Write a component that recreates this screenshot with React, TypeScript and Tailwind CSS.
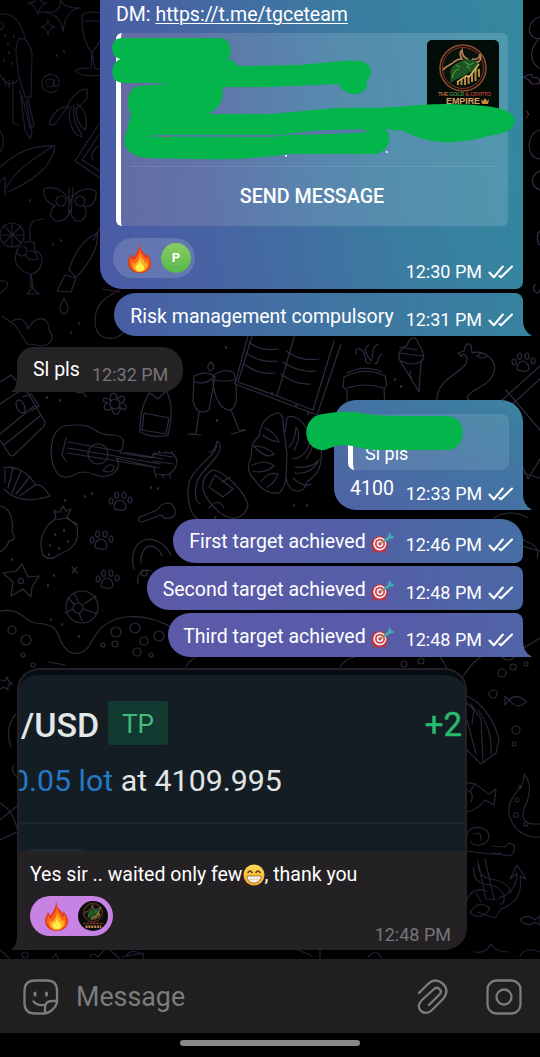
import React from "react";

function Checks() {
  return (
    <svg className="h-4 w-[26px] shrink-0" viewBox="0 0 26 16" fill="none" stroke="#fff" strokeWidth="2.1" strokeLinecap="round" strokeLinejoin="round">
      <path d="M1.500 8.500 5.800 13.200 14.800 2.500M11.500 12 13 13.200 24 2.500" />
    </svg>
  );
}

function Fire({ className }: { className: string }) {
  return (
    <svg className={className} viewBox="0 0 24 30">
      <path d="M11 0c1 3 0 5 4 9 1 1 2 2 2 4 1-1 1-2 1-3 3 3 6 8 5 12-1 5-6 8-11 8S0 27 0 20c0-4 2-6 3-9 1 1 2 3 2 4C8 11 11 7 11 0z" fill="#e63a16" />
      <path d="M12 4c0 3 1 6 3 8s2 4 3 4c1-1 1-2 1-3 2 3 3 7 2 10-1 3-5 6-9 6S2 26 2 20c0-2 0-4 1-6 1 1 1 4 3 3 3-3 6-8 6-13z" fill="#f9691a" />
      <path d="M12 10c0 5 4 6 5 10 1 1 2-1 2-2 2 6-2 11-7 11s-8-3-7-9c1 1 2 1 3 0 2-2 4-5 4-10z" fill="#ffac20" />
      <path d="M12 16c0 3 1 4 2 5s3 3 2 5c-1 3-7 3-8 0-1-3 0-4 1-4 1 0 3-3 3-6z" fill="#ffeb4a" />
    </svg>
  );
}

function Target() {
  return (
    <svg className="h-[22px] w-[24px] shrink-0" viewBox="0 0 24 22">
      <path d="M3 18 1.500 21M14 19l1 2.500" stroke="#94404a" strokeWidth="1.500" />
      <circle cx="8.500" cy="12.500" r="8.300" fill="#c5303c" />
      <circle cx="8.800" cy="11.800" r="6.600" fill="#f3e9ee" />
      <circle cx="9" cy="11.800" r="4.900" fill="#c9303e" />
      <circle cx="9" cy="11.800" r="3.400" fill="#f3e9ee" />
      <circle cx="9" cy="11.800" r="1.600" fill="#c9303e" />
      <path d="m9 11.800 7-5.500" stroke="#a28d50" strokeWidth="1.600" />
      <path d="m12.500 8.500 4.500-4 .5-3 2-.5.800 2.500 3 .7-1 2-3 .3-5 3.500z" fill="#43a9b4" />
    </svg>
  );
}

function Grin() {
  return (
    <svg className="h-[22px] w-[22px] shrink-0" viewBox="0 0 22 22">
      <defs>
        <linearGradient id="face" x2="0" y2="1">
          <stop stopColor="#ffdd55" />
          <stop offset="1" stopColor="#f5a82b" />
        </linearGradient>
      </defs>
      <circle cx="11" cy="11" r="10.500" fill="url(#face)" />
      <path d="M5 8.500q2-3 4 0M13 8.500q2-3 4 0" fill="none" stroke="#59391b" strokeWidth="1.500" strokeLinecap="round" />
      <path d="M4 12h14c0 4-3 7-7 7s-7-3-7-7z" fill="#fff" stroke="#8b5d2b" strokeWidth=".8" />
      <path d="M5 15.300h12M8 12v6M11 12v7M14 12v6" stroke="#ccb99b" strokeWidth=".6" />
    </svg>
  );
}

function BullEmblem() {
  return (
    <g>
      <circle cx="36" cy="28" r="23" fill="#07120b" stroke="#8d4a2f" strokeWidth="1.600" />
      <circle cx="36" cy="28" r="20.500" fill="none" stroke="#a2302b" strokeWidth=".9" />
      <path d="M23 43c2-7-1-9 1-14 3-6 8-6 12-9l7-1 6 2 4 1-3 4 1 5-3 3-5-2-4 3c-5 2-9 4-16 8z" fill="#1c5423" />
      <path d="M25 38c2-5 2-8 7-9M38 22l4 3 5-2M29 25l4 2M43 29l-3-3M47 28l3 2" fill="none" stroke="#4a953f" strokeWidth="1.200" />
      <path d="M16 30c4-5 8-5 11-8 3-3 5-3 8-3-2-3-3-6 0-9 0 5 2 8 6 9M45 19c5 1 8-1 8-5 2 5 0 8-4 8" fill="none" stroke="#b8805a" strokeWidth="1.700" />
      <path d="M31 45v-3M34.500 45v-6M38 45v-8M41.500 44v-9M45 42V33M48.500 41V29M52 37v-8" stroke="#b48a42" strokeWidth="2" />
      <path d="m30 42 9-6 3 1 10-13" fill="none" stroke="#e4bd62" strokeWidth="1.400" />
    </g>
  );
}

function EmpireLogo() {
  return (
    <svg className="h-[72px] w-[72px] rounded-[5px] bg-[#040c08]" viewBox="0 0 72 72">
      <BullEmblem />
      <g fontWeight="700">
        <text x="11" y="56" fontSize="5.600" fontFamily="Liberation Sans" textLength="53" fill="#b4623b">
          THE <tspan fill="#3d8b3f">GOLD</tspan> <tspan fill="#a23732">&amp; CRYPTO</tspan>
        </text>
        <text x="19" y="63.500" fontSize="8.500" fontFamily="Liberation Sans" textLength="34" lengthAdjust="spacingAndGlyphs" fill="#d8a067">EMPIRE</text>
      </g>
      <path d="m54 59 2 2 2-3 2 3 2-2-1 5h-6z" fill="#c78c36" />
    </svg>
  );
}

function Wallpaper() {
  const paw = "M-6 6c0-4 3-7 6-7s6 4 6 7-4 4-6 3-6 1-6-3zM-9-3a2 3 0 1 0 .1 0M-3.500-9a2 3.200 0 1 0 .1 0M4-9a2 3.200 0 1 0 .1 0M10-4a2 3 0 1 0 .1 0";
  return (
    <svg className="absolute inset-0 h-[960px] w-[540px]" viewBox="0 0 540 960" fill="none" strokeWidth="1.200" strokeLinecap="round" strokeLinejoin="round">
      <defs>
        <linearGradient id="ink" gradientUnits="userSpaceOnUse" x1="0" y1="0" x2="540" y2="200">
          <stop stopColor="#1a182b" />
          <stop offset=".5" stopColor="#31263e" />
          <stop offset="1" stopColor="#3b2b44" />
        </linearGradient>
        <linearGradient id="inkLow" gradientUnits="userSpaceOnUse" x1="0" y1="340" x2="0" y2="950">
          <stop stopColor="#332840" />
          <stop offset=".5" stopColor="#2b2a38" />
          <stop offset="1" stopColor="#212033" />
        </linearGradient>
      </defs>
      <g stroke="url(#ink)">
        <path d="M28 3q8 0 10-7 2 7 9 7-7 2-9 11-3-9-10-11M40 12h13q7-1 8-12 2 8 19 8-15 2-17 24-2-20-23-20M41 27q6 0 7-7 1 7 7 7-6 1-7 8-1-7-7-8" />
        <path d="M0 14c14-2 22 10 25 24M19 39c-6 8-1 24-1 34l7 24h6l1-44q-5-18-13-14M13 80v43l5 2M20 90l5 40 5 9 2-7-6-32M22 96l8 32 4-2-6-28M0 75c5 9 14 12 18 4M4 78l2 8M9 80v8M0 22c5 0 5 6 0 8" />
        <path d="M8 44v1M9 52v1M4 60v1M12 63v1M14 36v1M5 35v1" strokeWidth="2" />
        <circle cx="50" cy="83" r="4" /><path d="M54 79v7q5 2 5-4c-1-12-18-9-17 2 1 9 10 10 15 6" />
        <path d="M87 89c-10 0-18 12-20 18-9-1-16 10-18 17 8 5 11-11 20-18M71 107c-4 9 0 28 11 30 0-6-10-11-8-32M77 104c11 6 10 22 8 26-7-5-9-13-9-22M87 89v9q-3 5-10 10" />
        <path d="M82 15c4-4 16-4 25 0l-5 22q-4 8-10 16l3 16c10-1 13 2 12 5-10 3-30 2-31-3 0-3 8-3 15-3l1-15c-9-11-10-24-10-38zM84 21h17" />
        <path d="M0 167c18-16 34-22 55-21-2 20-21 34-47 46M4 192c12-25 31-33 49-46M0 181l5-4v18M99 124l-24 37 25 17M99 135l-17 25 18 11M0 130q7 11 0 22M99 146q-10 6-6 14" />
        <path d="M44 189c10-4 22 2 26 14 3-12 16-17 26-12 1 9-4 17-12 15 6 9-2 18-9 14-3-2-4-5-5-10-3 13-16 14-19 6-1-4 1-8 4-10-7-3-12-8-11-17zM69 187v28M73 187l-2 28" />
        <circle cx="61" cy="201" r="5" /><circle cx="80" cy="201" r="5" />
        <circle cx="12" cy="235" r="12" /><path d="M0 235h24M12 223v24M4 226l17 17M21 226 4 243M24 242h10l1 9q8 2 7 11-3 12-12 12l1 13 8 7H27l6-7-2-13q-14-3-16-15l2-9M30 242v-15l3-6 10-2" />
        <circle cx="22" cy="251" r="5" /><path d="m29 251 6 1 3 7-8 1-5-5" />
        <path d="M69 270c4-14 12-29 28-37 3 13-10 34-21 44zM65 275l11 3-5 14-14-1zM64 298q-8 13 0 16 8-3 0-16M0 281c9-1 11 5 0 12M12 321c10-5 14 1 16 8 8-15 21-13 21 1 8 9-1 15-6 16l-14-2M2 316l13 9 13 20" />
        <path d="M57 55v1M64 51v1M30 200v1M53 244v1M61 240v1M71 332v1M79 323v1" strokeWidth="2" />
      </g>
      <g stroke="url(#ink)">
        <path d="M540 17c-12 3-16 20-1 22M540 38c-10 9-12 23-1 30M523 77l8-3 2 4q7-2 7 5-9 3-11-3zM526 111l3 3-3 4M540 130c-14 2-15 28 0 29M540 171c-9 3-11 15 0 19M540 231c-4 3-3 12 0 14M535 285c-5 6 4 11 5 5M93 240l7-12M119 290c-10 6-24 11-24 31s20 21 28 12M103 289l17 3" />
      </g>
      <g stroke="url(#inkLow)">
        <path d="m249 332-14 52 82 31 24-71M252 336l-14 46 39 14 18-62M277 396l36 14 21-69M286 351q15 11 33 8M283 362q16 11 33 9M281 374q14 11 29 10M249 342q12 10 29 7M246 353q14 10 31 8M244 364q14 11 31 9" />
        <path d="m194 376-1 25q4 16 16 9l6-33c-5-6-15-4-21-1zM195 382q11 3 19-5M199 412l-3 22h-8l13 1M213 376c8-7 17-6 21-3 4 20 4 38-6 37-10-2-16-20-15-34zM214 380q8 2 20 0M231 410l8 20h7l-15 4M211 362q6 6-1 9-5-4 1-9" />
        <path d="M344 377q22-11 41-1l2 9-3 4 1 20M344 377l-1 10 4 3v20M347 388q18-6 36 0M347 373q17-9 35-1M356 354c-3-5 5-8 8-1 3 6-1 10 6 10M369 345c-7 3-2 11 2 16 4-9-1-12 7-17M382 354c-5 1-2 9-7 10" />
        <path d="M399 355c0-6 5-7 8-10 4-9 9-10 12 0l3 5 2 8-3 3-2 31-20-33zM400 347l17 3M399 353l23 3M401 361q12 6 21 0M411 371q-3 5 1 7" />
        <path d="M437 400c0-19 17-23 28-35 6-9-4-14-3-8l-4-4 6-2q2-10 7-6l1 8c14-5 30 11 19 25-5 9-21 11-24 20l17 15M477 356q7-6 10 0-5 4-10 0M540 366l-50 45M540 379l-34 31M540 430l-34-40M512 470l28 8M519 458l9 21 12-20" />
        <path d="M0 382l11-7 17 18 17 29q-1 6-4 7l-28 27q-3 0-5-4l-8-12M0 404l23-15M0 434l34-28M4 445l36-29M23 397l8-3 8 12-7 4" />
        <path d="M16 402q4-6 9 5 1 8-5 5-4-3-4-10M77 393q7-3 9 4M149 393c-5 10-9 17-9 39q14 7 28 3c5-23 4-31-2-46M144 413l25 5-3 16-24-4zM150 393l8 6 8-8" />
        <circle cx="115" cy="404" r="5" /><path d="M111 401c-4-9 7-11 6-1 4-8 13-2 4 3 9 1 5 11-1 4 1 9-8 10-8 1-6 6-12-2-4-5-8-1-5-9 3-2" />
        <path d="M65 426c-20 4-17 51 0 51 9 1 9-5 18-5 11 0 13 6 23 4 14-2 14-14 10-18l38 9 1 7 10 1q11-2 12-14-2-9-9-8h-14l-2 5-32-5q10-18-9-18c-14 0-16-7-24-9-8-2-15-1-22 0zM68 442l95 17M68 448l93 16M68 453l91 15M66 438l-4 17 4 6M153 454l20 3M153 461l20 3M159 452v-1M166 452v-1M172 452v-1M156 474v4M163 474v4M170 474v4" />
        <circle cx="98" cy="454" r="10" /><path d="M103 471q7-10 11-4-1 7-11 4" />
        <path d="M274 414c5-3 10 1 9 10l4 30-1 22M274 414c-12 5-13 13-15 22-9 8-7 16-8 22-5 9-2 17 4 22 6 10 14 14 24 13 6-5 7-11 7-17M286 478c4 19 20 15 21 4 11-8 16-16 14-32-1-13-9-18-15-22-5-10-15-14-19-10l-2 14M254 446q12 0 20 8-8 6-20-8M252 465q15-6 22 1-10 8-21 5M261 482q7-11 17-8-4 10-11 13M265 428q11 5 14 14-10-1-16-7M289 447q6-5 7-20 6 9-2 23M292 459q16-2 19-21 5 7-5 21M295 467q16 2 24-7-8 15-24 13M293 478q10 10 18 6" />
        <path d="M217 445c-2 11-17 17-26 33-5 10-4 27 3 38 7 7 20 8 22 0M209 452q6 0 8-11 7 5-1 16l-12 14c-10 9-11 29-4 33M212 470c11 0 34 22 36 36-7 20-25 12-35 0q-20-22-1-36zM215 475l18 14-10 8-14-10zM222 482l8-5M209 508q9-11 15 0" />
        <path d="M3 468c20-4 30 13 33 17 8-1 12 9 14 11-14 5-33 7-46-7M5 470v13M13 468l-5 20M21 471l-9 22M29 478l-13 16M35 485l-15 11M56 512l-2-2 2 8-8 7c-6 8-10 18-5 30q7 7 15 0c14-6 22-11 19-29l-10-9 4-8-5 2-3-5-3 6zM77 524l-11-6-10 2" />
        <path d="M0 506c13 2 13 20 12 26q6 8-3 9-2 7-9 11M22 564l6 13 11-1-7 11-1 10-8-8-12 7 2-14-10-9 13-2z" />
        <circle cx="21" cy="581" r="2.500" /><path d="m72 567 5 6m0-6-5 6M140 517l17-7q4-7 12-7 7 2 6 12-8 7-14 0l-19 7q-5 0-2-5M134 569c-8-31 23-41 37-14M141 563c-1-20 15-22 21-7M138 584c-2-10 5-16 13-13" />
        <circle cx="144" cy="573" r="3" /><circle cx="82" cy="607" r="16" /><circle cx="78" cy="608" r="5" /><path d="m79 603-5-10M83 609l14 5M79 613l3 8M73 609l-8 4M74 604l-6-6M84 604l12-8" />
        <path d="M0 611c21-4 24 10 35 12 18 1 21 5 25 16 8 20 24 18 32 2 15-31 54-30 84-11M49 662l16 3M186 667q4-8 14-12M340 667q6-9 15-10M440 657c6 5 14 37 24 18 7-11 19-23 24-19M501 656q10 10 16-4l23-14" />
        {[[12,630,4],[26,640,5],[23,655,2],[116,632,5],[135,628,5],[144,641,4],[159,636,5],[115,644,3],[103,645,2],[137,652,4],[151,655,2],[502,673,4],[513,667,3],[526,664,2],[493,694,4],[516,730,4],[514,744,2],[404,664,3],[421,661,3],[25,955,3],[33,665,2]].map(([x, y, r], i) => <circle key={i} cx={x} cy={y} r={r} />)}
        <g transform="translate(120 501)"><path d={paw} /></g><g transform="translate(101 540)"><path d={paw} /></g><g transform="translate(107 579)"><path d={paw} /></g><g transform="translate(523 362)"><path d={paw} /></g>
        <path d="M47 397v1M60 400v1M65 500v1M85 496v1M92 493v1M151 487v1M158 488v1M12 559v1M54 575v1M48 585v1M51 619v1M62 624v1M79 636v1M272 393v1M296 405v1M217 420v1M308 413v1M294 505v1M307 505v1M395 379v1M401 386v1M55 534v1M64 530v1M68 541v1M50 545v1M59 548v1M49 554v1M226 347v1" strokeWidth="2" />
        <path d="M510 555c-12-15 7-22 15-14q16 5 12 17M494 518q16-10 34 0M522 546l18 5M1 680l4 1 2-4 2 5 3 1-4 3v4l-4-3-4 2M16 714q-12 14-5 33M14 765q-4 5 3 12M0 820l17-14M0 840l17-8M0 803q13 7 17 26" />
        <path d="M467 696l10 6c10 9 18 21 22 37l-3 14-15 11-14-14M471 704l10 15 2 44M478 710c10 14 14 26 13 44M467 720l9 34M467 703l7 7-2 14M509 700q7-7 15 0 4 1 1 3-8 7-16-3l-4-4v9l4-5" />
        <path d="M467 783c10-1 15 7 22 11l7-5-2 16-9-5c-5 7-10 10-18 12M475 783l-5 9M467 790q8 3 4 12M524 774q9 10 3 28-12 24 13 22M524 774c1 19-20 20-14 44q8 20 30 19" />
        <circle cx="517" cy="800" r="2" /><circle cx="520" cy="787" r="1.500" /><circle cx="516" cy="815" r="2.500" /><circle cx="526" cy="824" r="2" />
        <path d="M467 836c0-12 21-11 22 0 0 9-14 12-18 6M474 834q8-3 7 6M467 851l22 3 12-1M485 859l9 40M478 861l8 38M486 899l11 1M492 846l13 1q3-6 9-2 2 7-4 11l-18-3M499 898q18-6 18-25l-7 6 7-14 9 14-6-3q4 25-19 33l-6 9-18-6M474 867q-2 14 10 17 15 1 20 11 1 10-4 9M478 865q1 12 12 14 18 2 21 14" />
        <path d="M467 900q6-14 20-9M470 913q8-14 20-5-8 14-20 5M476 893l5 9M520 920q7-7 15 0l5-4v9l-5-3q-7 6-15-2M474 952q12 2 17-8 4 8 17 8M520 956q6-10 20-4M0 950l9 8M52 958l4-4 3 6M90 957q3-6 8 0l9-10 13 12M122 957l21-4v6M126 956q6-8 15-2M296 949l16 7M320 948v10M368 957q10-10 13 1" />
      </g>
    </svg>
  );
}

function Tail({ color, incoming = false }: { color: string; incoming?: boolean }) {
  return (
    <svg className={incoming ? "absolute -left-[6px] bottom-0 h-4 w-[10px]" : "absolute -right-[9px] bottom-0 h-4 w-[10px]"} viewBox="0 0 10 16">
      <path d={incoming ? "M10 16H1q-2 0 0-1 5-4 5-15h4z" : "M0 16h9q1-1 0-1Q1 11 1 0H0z"} fill={color} />
    </svg>
  );
}

function Stamp({ time }: { time: string }) {
  return <div className="flex items-center gap-[6px]"><span className="text-[18px] leading-[22px] whitespace-nowrap">{time}</span><Checks /></div>;
}

function TargetMessage({ word, time, className, tail }: { word: string; time: string; className: string; tail?: boolean }) {
  return (
    <div className={"relative flex h-11 justify-end self-end pr-[9px] " + className}>
      <div className="mt-px flex h-6 items-center text-[19.500px] leading-6"><span className="whitespace-nowrap">{word} target achieved</span><span className="mt-[2px] ml-[5px]"><Target /></span></div>
      <div className="mt-[5px] ml-[11px]"><Stamp time={time} /></div>
      {tail && <Tail color="#5064a6" />}
    </div>
  );
}

export default function App() {
  return (
    <main className="relative flex h-[1057px] w-[540px] flex-col overflow-hidden bg-black font-['Roboto',sans-serif] text-white">
      <Wallpaper />
      <section className="relative flex h-[959px] flex-col pr-[17px]">
        <article className="relative h-[289px] w-[423px] self-end rounded-br-[7px] rounded-bl-[22px] bg-[linear-gradient(78deg,#4a5aa5_0%,#4763a3_25%,#3a7da0_65%,#33899f_100%)] pr-[15px] pl-4">
          <p className="h-[33px] pt-[3px] text-[19.500px] leading-6">DM: <span className="underline decoration-1 underline-offset-2">https://t.me/tgceteam</span></p>
          <div className="relative h-[193px] rounded-[6px] border-l-[5px] border-white bg-[linear-gradient(100deg,#ffb4aa26,#ffffff22_50%,#ffffff24)] pt-[7px]">
            <div className="flex justify-end pr-[9px]"><EmpireLogo /></div>
            <div className="mt-[54px] mr-[10px] ml-[9px] h-px bg-white/10" />
            <p className="mt-[18px] pr-[5px] text-center text-[19.700px] leading-6 font-medium">SEND MESSAGE</p>
            <svg className="absolute -top-[2px] -left-[11px] h-[132px] w-[412px]" viewBox="110 31 412 132" fill="#04b54b">
              <path d="M121 38h98c13 0 14 18 8 21 8 1 9 5 11 7l62-1 42-4c20-2 29 2 29 10 0 6-5 9-4 13-1 14-24 13-28 0l-70 3h-47c3 7-1 21-11 25l-2 2h61c50-4 60-7 100-6 40-1 45-4 80-4 25 1 64 1 65 17-2 13-17 12-34 17-27 6-52 7-77-7l-20-2c10 4 5 26-11 25l-85 0c-35 6-83 6-142 4-13-1-25-10-21-21l6-23c-6-10-3-28 9-28 5-1 15 0 28-3h-45c-16-1-12-22-2-24-12-2-12-20 0-21z" />
              <path d="M145 136l130-1 110-6v12H145z" />
              <path d="M146 136.500c10-2 20-1.500 30-1.500h95c15 0 20-2 30-3 20-2 45-2.500 64-2.500l1 3c-25 1-45 2-78 2.500-12 1-14 2-25 2z" fill="#5a75aa" />
              <path d="M163 136h6v1h-6z" fill="#a45558" />
              <path d="M285 155h2v1.500h-2zM386 151h1.500v2H386z" fill="white" />
            </svg>
          </div>
          <div className="mt-3 -ml-[3px] flex h-10 w-[82px] items-center rounded-full bg-white/15 pr-1 pl-[15px]">
            <Fire className="h-[30px] w-6" />
            <span className="ml-[9px] flex h-[30px] w-[30px] items-center justify-center rounded-full bg-linear-to-b from-[#87cc62] to-[#56b94c] text-[13px] font-bold">P</span>
          </div>
          <div className="absolute right-[9px] bottom-[6px]"><Stamp time="12:30 PM" /></div>
        </article>

        <article className="relative mt-1 flex h-[43px] w-[409px] justify-end self-end rounded-l-[22px] rounded-tr-[8px] bg-[linear-gradient(90deg,#495da4,#4172a2_45%,#37829f)] pr-[9px]">
          <p className="mt-[12px] text-[19.500px] leading-6 whitespace-nowrap">Risk management compulsory</p>
          <div className="mt-[16px] ml-3"><Stamp time="12:31 PM" /></div>
          <Tail color="#37829f" />
        </article>

        <article className="relative mt-[11px] ml-[17px] flex h-[45px] w-[166px] rounded-tl-[17px] rounded-r-[21px] bg-[#242225] pl-4">
          <p className="mt-[11px] text-[19.500px] leading-6">Sl pls</p>
          <span className="mt-[17px] ml-3 text-[18px] leading-[22px] whitespace-nowrap text-[#777477]">12:32 PM</span>
          <Tail color="#242225" incoming />
        </article>

        <article className="relative mt-2 h-[110px] w-[189px] self-end rounded-t-[22px] rounded-bl-[22px] bg-[linear-gradient(30deg,#5062a6,#4275a3_60%,#3b829f)] px-[14px] pt-[14px]">
          <div className="h-[56px] rounded-[7px] border-l-[5px] border-white bg-white/10 pt-[28px] pl-3 text-[18px] leading-6">Sl pls</div>
          <div className="mt-[7px] flex pl-[2px]"><p className="text-[19.500px] leading-6">4100</p><div className="mt-[6px] ml-3"><Stamp time="12:33 PM" /></div></div>
          <svg className="absolute top-[10px] -left-[30px] h-[42px] w-[162px]" viewBox="304 410 162 42"><path d="M323 414c17-3 30-3 44 0 15 2 29 2 80 2 21 0 21 34 0 34h-66c-20 1-26-7-45-4-8 2-10 5-15 4-20-2-20-34 2-36z" fill="#04b54b" /></svg>
          <Tail color="#4275a3" />
        </article>

        <div className="mt-[9px] flex flex-col gap-[3px]">
          <TargetMessage word="First" time="12:46 PM" className="w-[350px] rounded-l-[22px] rounded-tr-[22px] rounded-br-[8px] bg-[linear-gradient(85deg,#5b5ba8,#525fa6_50%,#456fa4)] pt-[10px]" />
          <TargetMessage word="Second" time="12:48 PM" className="w-[376px] rounded-l-[22px] rounded-r-[8px] bg-[linear-gradient(85deg,#5b5aa8,#565da7_55%,#4b68a5)] pt-[11px]" />
          <TargetMessage word="Third" time="12:48 PM" className="w-[355px] rounded-l-[22px] rounded-tr-[8px] bg-[linear-gradient(85deg,#5b5aa8,#585ba8_60%,#5064a6)] pt-[11px]" tail />
        </div>

        <article className="relative mt-[11px] ml-[17px] h-[282px] w-[450px] rounded-t-[22px] rounded-br-[22px] bg-[#242125] p-[2px]">
          <div className="h-[181px] overflow-hidden rounded-t-[20px] border-t-[5px] border-[#060d12] bg-[#141d23]">
            <div className="mt-[26px] flex h-[44px] items-center">
              <span className="mt-[4px] ml-[2px] w-[80px] text-[34px] leading-[44px] font-medium text-[#e2e7e9]">/USD</span>
              <span className="ml-[7px] flex h-[44px] w-[60px] items-center justify-center rounded-[3px] bg-[#133a31] pt-[2px] text-[26px] text-[#43bc79]">TP</span>
              <span className="mt-[4px] ml-auto pr-[3px] text-[33px] text-[#28b96c] [-webkit-text-stroke:0.5px_#28b96c]">+2</span>
            </div>
            <div className="mt-[14px] -ml-[7px] text-[30.300px] leading-[44px] whitespace-nowrap text-[#e2e5e6]"><span className="text-[#2379c8]">0.05 lot</span> at 4109.995</div>
            <div className="mt-[19px] h-[2px] bg-[#1c272c]" />
            <div className="mt-[25px] ml-[10px] h-[3px] w-[54px] rounded-t-full bg-[#20292e]" />
          </div>
          <div className="mt-[12px] flex h-6 items-center pl-[11px] text-[19.500px] leading-6 whitespace-nowrap"><span>Yes sir .. waited only few</span><Grin /><span>, thank you</span></div>
          <div className="mt-[9px] ml-[11px] flex h-10 w-[83px] items-center rounded-full bg-[#c783e3] pl-[15px]">
            <Fire className="h-[30px] w-6" />
            <svg className="ml-[9px] h-[30px] w-[30px] rounded-full bg-[#090e0b]" viewBox="0 0 72 72"><BullEmblem /><path d="M12 54h50" stroke="#7c312b" strokeWidth="4" strokeDasharray="6 2" /><path d="M18 62h38" stroke="#bf874a" strokeWidth="6" strokeDasharray="5 2" /></svg>
          </div>
          <span className="absolute right-[16px] bottom-[4px] text-[18px] leading-[22px] text-[#777477]">12:48 PM</span>
          <Tail color="#242125" incoming />
        </article>
      </section>

      <footer className="relative flex h-[74px] items-center bg-[#1f1f1f] pt-px pr-[18px] pl-[23px] text-[#7c7c7c]">
        <svg className="h-[36px] w-[36px]" viewBox="0 0 36 36" fill="none" stroke="currentColor" strokeWidth="2.300" strokeLinecap="round" strokeLinejoin="round">
          <path d="M34 22V12C34 5 31 1.500 24 1.500H12C5 1.500 1.500 5 1.500 12v12c0 7 3.500 10.500 10.500 10.500h9.500C27 34 34 28 34 22h-4c-6 0-8 2-8 8v4M10.500 22.500q4.500 5 12 3" />
          <path d="M12 14v2M23.500 14v2" strokeWidth="3" />
        </svg>
        <span className="ml-[17px] text-[26.800px] leading-8">Message</span>
        <svg className="ml-auto h-[36px] w-[32px]" viewBox="0 0 32 36" fill="none" stroke="currentColor" strokeWidth="2.300" strokeLinecap="round" strokeLinejoin="round">
          <path d="m2 14 9-9C15 1 20 .5 25 4c6 5 5 11 1 16L15 31c-3 3-7 4-11 1-4-4-2-8 1-11L17 10c3-3 9 1 6 5L12 26" />
        </svg>
        <svg className="ml-[37px] h-[36px] w-[36px]" viewBox="0 0 36 36" fill="none" stroke="currentColor" strokeWidth="2.300"><rect x="1.500" y="1.500" width="33" height="33" rx="9" /><circle cx="18" cy="18" r="7.500" /></svg>
      </footer>
      <nav className="relative flex h-6 justify-center bg-black pt-[7px]"><div className="h-[6px] w-[180px] rounded-full bg-[#888]" /></nav>
    </main>
  );
}
